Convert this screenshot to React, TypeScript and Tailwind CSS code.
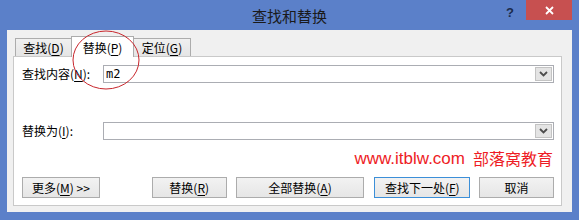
import React from "react";

const ui = { fontFamily: '"Noto Sans CJK SC", "Noto Sans", sans-serif' };

function U({ c }: { c: string }) {
  return <span className="underline underline-offset-[2px]">{c}</span>;
}

function Chevron() {
  return (
    <svg width="9" height="6" viewBox="0 0 9 6">
      <path d="M1 1 L4.5 4.5 L8 1" fill="none" stroke="#4d4d4d" strokeWidth="1.8" />
    </svg>
  );
}

function Combo({ value }: { value?: string }) {
  return (
    <div className="flex-1 h-[18px] border border-[#abadb3] bg-white flex items-stretch">
      <div
        className="flex-1 pl-[2px] text-[12px] leading-[16px] text-black"
        style={{ fontFamily: '"DejaVu Sans Mono", "Liberation Mono", monospace' }}
      >
        {value}
      </div>
      <div className="w-[17px] my-px mr-px border border-[#c3c3c3] bg-[#e4e4e4] flex items-center justify-center">
        <Chevron />
      </div>
    </div>
  );
}

function Btn({ w, ml, children, def }: { w: string; ml: string; children: React.ReactNode; def?: boolean }) {
  return (
    <div
      className={`${w} ${ml} h-[21px] border ${def ? "border-[#3c8fd8]" : "border-[#acacac]"} bg-gradient-to-b from-[#f2f2f2] to-[#e6e6e6] flex items-center justify-center text-[12px] text-black`}
    >
      {children}
    </div>
  );
}

export default function App() {
  return (
    <div className="relative w-[579px] h-[220px] bg-[#5b80c9] overflow-hidden" style={ui}>
      {/* title bar */}
      <div className="relative h-[30px] flex items-center justify-center">
        <span className="text-[15px] text-[#1a1a1a] leading-none">查找和替换</span>
        <div className="absolute right-[7px] top-0 flex items-start">
          <span
            className="mt-[3px] mr-[12px] text-[13px] font-bold text-[#1b2b4b]"
            style={{ fontFamily: '"Liberation Sans", sans-serif' }}
          >
            ?
          </span>
          <div className="w-[46px] h-[20px] bg-[#c75050] flex items-center justify-center">
            <svg width="9" height="9" viewBox="0 0 9 9">
              <path d="M1 1 L8 8 M8 1 L1 8" stroke="#ffffff" strokeWidth="1.8" />
            </svg>
          </div>
        </div>
      </div>

      {/* body */}
      <div className="mx-[7px] h-[182px] bg-[#f0f0f0] pt-[6px] pl-[6px] pr-[10px]">
        {/* tabs */}
        <div className="relative z-10 h-[20px] pl-[2px] flex items-end text-[12px] text-black">
          <div className="w-[57px] h-[18px] border border-b-0 border-[#acacac] bg-gradient-to-b from-[#f0f0f0] to-[#e5e5e5] flex items-center justify-center">
            <span>
              查找(<U c="D" />)
            </span>
          </div>
          <div className="-ml-px w-[63px] h-[21px] -mb-px border border-b-0 border-[#acacac] bg-white flex items-start justify-center pt-[2px]">
            <span>
              替换(<U c="P" />)
            </span>
          </div>
          <div className="-ml-px w-[58px] h-[18px] border border-b-0 border-[#acacac] bg-gradient-to-b from-[#f0f0f0] to-[#e5e5e5] flex items-center justify-center">
            <span>
              定位(<U c="G" />)
            </span>
          </div>
        </div>

        {/* panel */}
        <div className="h-[150px] border border-[#c9c9c9] bg-white pl-[8px] pr-[7px] pt-[8px] text-[12px] text-black">
          <div className="flex items-center">
            <div className="w-[81px]">
              查找内容(<U c="N" />):
            </div>
            <Combo value="m2" />
          </div>
          <div className="mt-[39px] flex items-center">
            <div className="w-[81px]">
              替换为(<U c="I" />):
            </div>
            <Combo />
          </div>
          <div className="mt-[7px] h-[22px] flex items-center justify-end pr-px text-[#ee1c25] leading-none">
            <span className="text-[17px]" style={{ fontFamily: '"Liberation Sans", sans-serif' }}>
              www.itblw.com
            </span>
            <span className="ml-[8px] text-[16px]">部落窝教育</span>
          </div>
          <div className="mt-[8px] flex">
            <Btn w="w-[78px]" ml="ml-0">
              更多(<U c="M" />)&nbsp;&gt;&gt;
            </Btn>
            <Btn w="w-[75px]" ml="ml-[52px]">
              替换(<U c="R" />)
            </Btn>
            <Btn w="w-[129px]" ml="ml-[9px]">
              全部替换(<U c="A" />)
            </Btn>
            <Btn w="w-[96px]" ml="ml-[10px]" def>
              查找下一处(<U c="F" />)
            </Btn>
            <Btn w="w-[75px]" ml="ml-[9px]">
              取消
            </Btn>
          </div>
        </div>
      </div>

      {/* red annotation circle */}
      <svg className="absolute left-[72px] top-[30px] z-20" width="68" height="60" viewBox="0 0 68 60">
        <ellipse cx="34" cy="30" rx="33" ry="29" fill="none" stroke="#c8262c" strokeWidth="1" />
      </svg>
    </div>
  );
}
